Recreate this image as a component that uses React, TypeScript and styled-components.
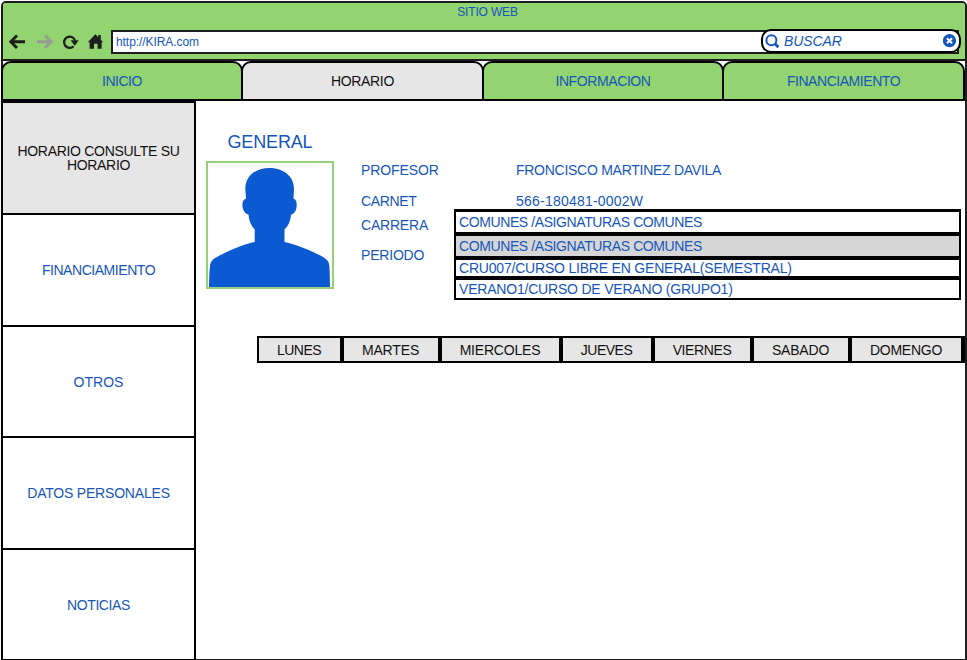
import React from 'react';
import styled, { createGlobalStyle } from 'styled-components';

const green = '#92d46f';
const blue = '#1656bd';
const gray = '#e6e6e6';
const ink = '#1d1d1d';

const GlobalStyle = createGlobalStyle`
  * { box-sizing: border-box; }
  body { margin: 0; background: #fafafa; overflow: hidden; }
`;

const Page = styled.div`
  height: 660px;
  padding: 1px 0 0 1px;
  overflow: hidden;
  font-family: 'Liberation Sans', Arial, sans-serif;
  font-size: 14px;
  line-height: 14px;
  color: ${blue};
  white-space: nowrap;
`;

const Browser = styled.div`
  width: 966px;
  height: 660px;
  border: 2px solid ${ink};
  border-radius: 5px 5px 0 0;
  background: #fff;
`;

const Header = styled.header`
  height: 58px;
  background: ${green};
  border-bottom: 2px solid ${ink};
  border-radius: 3px 3px 0 0;
`;

const Title = styled.div`
  height: 27px;
  padding: 2px 0 0 7px;
  text-align: center;
  font-size: 12px;
  letter-spacing: -0.15px;
`;

const Toolbar = styled.div`
  display: flex;
  height: 24px;
`;

const NavIcons = styled.svg`
  width: 108px;
  height: 24px;
  flex: none;
`;

const AddressBar = styled.div`
  display: flex;
  justify-content: space-between;
  width: 848px;
  height: 24px;
  border: 2px solid ${ink};
  background: #fff;
  font-size: 12px;
`;

const Url = styled.span`
  padding: 3px 0 0 3px;
  letter-spacing: -0.07px;
`;

const Search = styled.div`
  display: flex;
  align-items: center;
  width: 200px;
  height: 24px;
  flex: none;
  margin: -3px -4px 0 0;
  padding: 0 2px;
  border: 2px solid #000;
  border-radius: 10px;
  background: #fff;
  font-size: 14px;
  font-style: italic;
`;

const SearchText = styled.span`
  flex: 1;
  padding-left: 5px;
  letter-spacing: -0.1px;
`;

const Icon = styled.svg<{ $size: number }>`
  width: ${(p) => p.$size}px;
  height: ${(p) => p.$size}px;
  flex: none;
`;

const Text = styled.span<{ $tracking: number }>`
  letter-spacing: ${(p) => p.$tracking}px;
`;

const Tabs = styled.nav`
  display: grid;
  grid-template-columns: 240px 241px 240px 241px;
  height: 40px;
  margin-left: -2px;
`;

const Tab = styled.div<{ $active?: boolean }>`
  display: flex;
  align-items: center;
  justify-content: center;
  width: calc(100% + 2px);
  border: 2px solid #000;
  border-radius: 10px 10px 0 0;
  background: ${(p) => (p.$active ? gray : green)};
  color: ${(p) => (p.$active ? '#111' : blue)};
`;

const Body = styled.div`
  display: flex;
`;

const Sidebar = styled.aside`
  display: grid;
  grid-template-rows: 112px 112px 111px 112px 111px;
  width: 195px;
  height: 559px;
  margin-left: -2px;
  border: 2px solid #000;
  border-bottom: 0;
`;

const SideItem = styled.div<{ $active?: boolean }>`
  display: flex;
  align-items: center;
  justify-content: center;
  text-align: center;
  white-space: normal;
  padding: 0 10px;
  border-bottom: 2px solid #000;
  background: ${(p) => (p.$active ? gray : '#fff')};
  color: ${(p) => (p.$active ? '#111' : blue)};

  &:last-child { padding-top: 1px; }
`;

const Content = styled.main`
  flex: 1;
  padding: 31px 0 0 10px;
`;

const Profile = styled.section`
  display: flex;
`;

const PhotoColumn = styled.div`
  width: 128px;
`;

const Heading = styled.h1`
  margin: 0;
  height: 29px;
  line-height: 20px;
  font-size: 18px;
  font-weight: 400;
  text-align: center;
  letter-spacing: -0.15px;
`;

const Photo = styled.svg`
  display: block;
  width: 128px;
  height: 128px;
  border: 2px solid #97cf7b;
`;

const Labels = styled.div`
  display: grid;
  grid-template-rows: 31px 24px 30px 20px;
  align-content: start;
  width: 93px;
  margin: 31px 0 0 27px;
`;

const Details = styled.div`
  width: 507px;
  margin-top: 31px;
`;

const Value = styled.div<{ $height: number }>`
  height: ${(p) => p.$height}px;
  padding-left: 62px;
`;

const Options = styled.div`
  display: grid;
  grid-template-rows: 20px 20px 16px 18px;
  row-gap: 4px;
  padding: 3px 2px 2px;
  background: #000;
`;

const Option = styled.div<{ $selected?: boolean }>`
  display: flex;
  align-items: center;
  padding-left: 3px;
  background: ${(p) => (p.$selected ? '#d6d6d6' : '#fff')};
`;

const Week = styled.div`
  display: grid;
  grid-template-columns: 85px 98px 121px 92px 99px 98px 115px;
  height: 27px;
  margin: 36px 0 0 51px;
`;

const Day = styled.div`
  display: flex;
  align-items: center;
  justify-content: center;
  border: 2px solid #000;
  padding: 1px 1px 0 0;
  background: ${gray};
  color: #111;

  &:last-child { border-right-width: 4px; }
`;

type Label = [text: string, tracking: number];

const tabs: Label[] = [['INICIO', -0.5], ['HORARIO', -0.35], ['INFORMACION', -0.4], ['FINANCIAMIENTO', -0.45]];
const sections: Label[] = [
  ['HORARIO CONSULTE SU HORARIO', -0.3],
  ['FINANCIAMIENTO', -0.45],
  ['OTROS', 0],
  ['DATOS PERSONALES', -0.2],
  ['NOTICIAS', -0.4],
];
const fields: Label[] = [['PROFESOR', -0.1], ['CARNET', -0.35], ['CARRERA', -0.2], ['PERIODO', -0.2]];
const options: Label[] = [
  ['COMUNES /ASIGNATURAS COMUNES', -0.4],
  ['COMUNES /ASIGNATURAS COMUNES', -0.4],
  ['CRU007/CURSO LIBRE EN GENERAL(SEMESTRAL)', -0.2],
  ['VERANO1/CURSO DE VERANO (GRUPO1)', -0.2],
];
const days: Label[] = [
  ['LUNES', -0.5],
  ['MARTES', -0.15],
  ['MIERCOLES', -0.2],
  ['JUEVES', -0.5],
  ['VIERNES', -0.4],
  ['SABADO', -0.2],
  ['DOMENGO', -0.25],
];

export default function App() {
  return (
    <>
      <GlobalStyle />
      <Page>
        <Browser>
          <Header>
            <Title>SITIO WEB</Title>
            <Toolbar>
              <NavIcons viewBox="3 30 108 24" fill="none">
                <path d="M25 41.7H11M17 35.5L10.8 41.7L17 48" stroke="#1d1d1d" strokeWidth="2.9" />
                <path d="M37 41.7H50M45 35.5L51.2 41.7L45 48" stroke="#979c94" strokeWidth="2.9" />
                <path d="M73.6 46.2A5.6 5.6 0 1 1 75 40.5" stroke="#1d1d1d" strokeWidth="2.3" />
                <path d="M70.6 40.3H78.7L74.8 45.7Z" fill="#1d1d1d" />
                <path d="M87.8 42.3L95.4 34.3L98.2 37.2V35.1H100.8V39.8L103.2 42.3H101.6V48.8H97.6V43.8H94V48.8H89.6V42.3Z" fill="#1d1d1d" />
              </NavIcons>
              <AddressBar>
                <Url>http://KIRA.com</Url>
                <Search>
                  <Icon $size={14} viewBox="0 0 14 14" fill="none" stroke={blue}>
                    <circle cx="6.4" cy="6.2" r="5" strokeWidth="2" />
                    <path d="M9.8 9.8L13.4 13.2" strokeWidth="2.8" />
                  </Icon>
                  <SearchText>BUSCAR</SearchText>
                  <Icon $size={14} viewBox="0 0 14 14">
                    <circle cx="6.5" cy="6.7" r="6.6" fill={blue} />
                    <path d="M4 4.2L9 9.2M9 4.2L4 9.2" stroke="#fff" strokeWidth="2.1" />
                  </Icon>
                </Search>
              </AddressBar>
            </Toolbar>
          </Header>
          <Tabs>
            {tabs.map(([t, k]) => (
              <Tab key={t} $active={t === 'HORARIO'}><Text $tracking={k}>{t}</Text></Tab>
            ))}
          </Tabs>
          <Body>
            <Sidebar>
              {sections.map(([s, k], i) => (
                <SideItem key={s} $active={i === 0}><Text $tracking={k}>{s}</Text></SideItem>
              ))}
            </Sidebar>
            <Content>
              <Profile>
                <PhotoColumn>
                  <Heading>GENERAL</Heading>
                  <Photo viewBox="208 163 124 124">
                    <path
                      fill="#0b5ad1"
                      d="M269.3 168C282 168 294 175 294 189L293.5 198.6C296 199.5 296.8 202 296.7 205.5C296.6 210 294.5 214 291 214.5C290.5 221 288.5 225.5 284.5 229.5V242C293 243.5 314 251.5 323 257C327 259.5 329 261.5 329.3 266C329.8 272 330 280 330 287H209C209 280 209.3 272 210 266C210.5 261.5 213 259 217 257C226 251.5 246 243.5 254.7 242V229.5C251 225.5 249 221 248.5 214.5C245 214 242.7 210 242.4 205.5C242.3 202 243.5 199.5 246 198.6L245.3 189C245.3 175 257 168 269.3 168Z"
                    />
                  </Photo>
                </PhotoColumn>
                <Labels>
                  {fields.map(([f, k]) => (
                    <Text key={f} $tracking={k}>{f}</Text>
                  ))}
                </Labels>
                <Details>
                  <Value $height={31}><Text $tracking={-0.27}>FRONCISCO MARTINEZ DAVILA</Text></Value>
                  <Value $height={15}><Text $tracking={0.22}>566-180481-0002W</Text></Value>
                  <Options>
                    {options.map(([o, k], i) => (
                      <Option key={i} $selected={i === 1}><Text $tracking={k}>{o}</Text></Option>
                    ))}
                  </Options>
                </Details>
              </Profile>
              <Week>
                {days.map(([d, k]) => (
                  <Day key={d}><Text $tracking={k}>{d}</Text></Day>
                ))}
              </Week>
            </Content>
          </Body>
        </Browser>
      </Page>
    </>
  );
}
